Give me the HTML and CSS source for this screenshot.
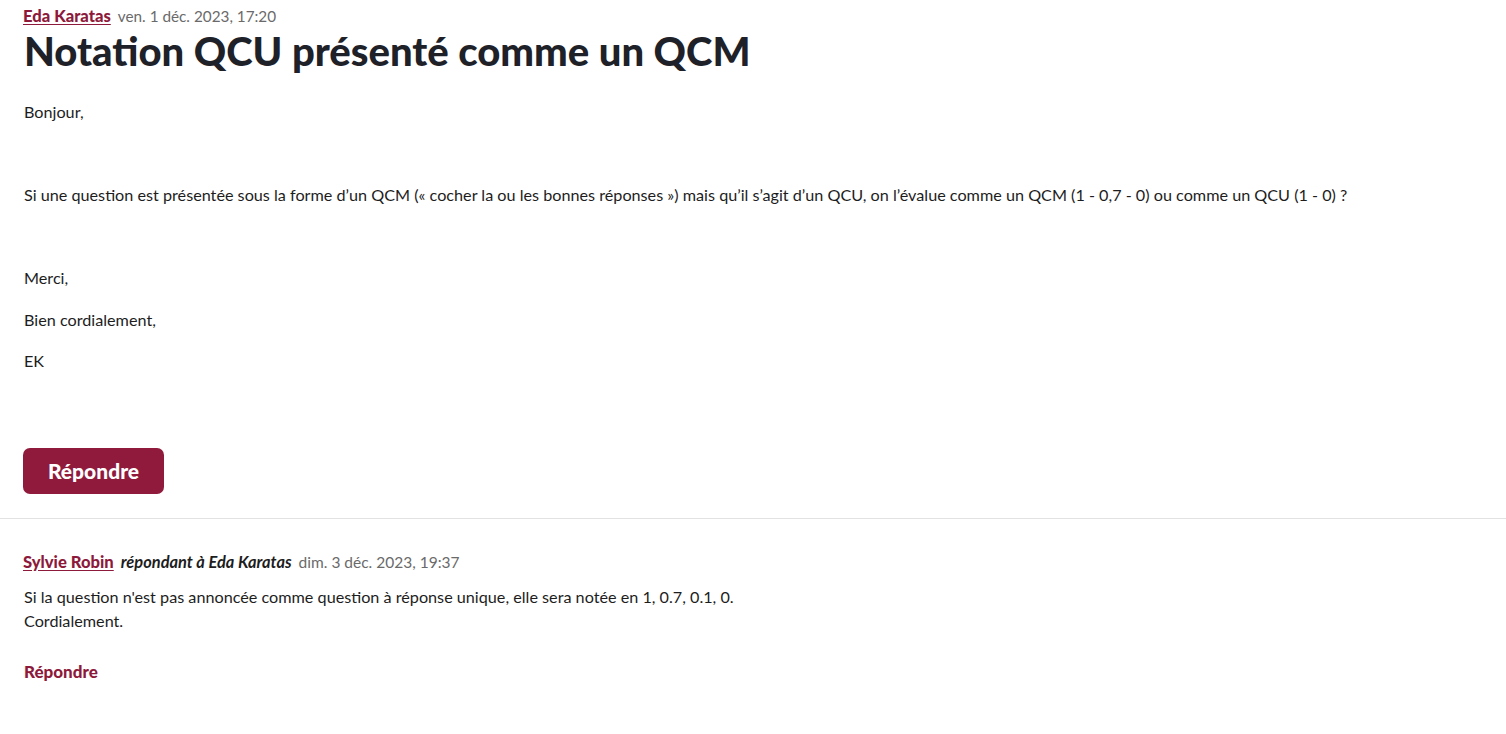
FILE: index.html
```html
<!DOCTYPE html>
<html lang="fr">
<head>
<meta charset="utf-8">
<title>Notation QCU présenté comme un QCM</title>
<link rel="stylesheet" href="styles.css">
</head>
<body>
<article class="post">
  <div class="meta">
    <a class="author" href="#">Eda Karatas</a>
    <span class="date">ven. 1 déc. 2023, 17:20</span>
  </div>
  <h1 class="title">Notation QCU présenté comme un QCM</h1>
  <div class="content">
    <p>Bonjour,</p>
    <p>&nbsp;</p>
    <p>Si une question est présentée sous la forme d’un QCM (« cocher la ou les bonnes réponses ») mais qu’il s’agit d’un QCU, on l’évalue comme un QCM (1 - 0,7 - 0) ou comme un QCU (1 - 0) ?</p>
    <p>&nbsp;</p>
    <p>Merci,</p>
    <p>Bien cordialement,</p>
    <p>EK</p>
  </div>
  <button class="btn-reply" type="button">Répondre</button>
</article>
<section class="reply">
  <div class="meta">
    <a class="author" href="#">Sylvie Robin</a>
    <em class="replying">répondant à Eda Karatas</em>
    <span class="date date-reply">dim. 3 déc. 2023, 19:37</span>
  </div>
  <div class="reply-body">Si la question n'est pas annoncée comme question à réponse unique, elle sera notée en 1, 0.7, 0.1, 0.<br>Cordialement.</div>
  <a class="link-reply" href="#">Répondre</a>
</section>
</body>
</html>
```
FILE: styles.css
```css
html, body {
  margin: 0;
  padding: 0;
  background: #ffffff;
}
body {
  font-family: Lato, "Open Sans", sans-serif;
  font-size: 16.2px;
  color: #1d1d1d;
}
.post {
  padding: 4px 24px 24px;
  border-bottom: 1px solid #e2e2e2;
}
.meta {
  display: flex;
  align-items: baseline;
  gap: 7px;
  line-height: 24px;
}
.author {
  color: #8d1a3b;
  font-weight: 900;
  font-size: 16.6px;
  text-decoration: underline;
  text-underline-offset: 2px;
  margin-left: -1px;
}
.date {
  color: #6a6a6a;
  font-size: 15.3px;
}
.title {
  margin: 0;
  font-size: 40px;
  line-height: 46px;
  font-weight: 900;
  color: #1e2128;
}
.content {
  margin-top: 26px;
}
.content p {
  margin: 0 0 17px;
  line-height: 24.5px;
}
.btn-reply {
  margin-top: 57px;
  margin-left: -1px;
  width: 141px;
  height: 46px;
  border: none;
  border-radius: 7px;
  background: #8f1a3c;
  color: #ffffff;
  font-family: Lato, sans-serif;
  font-weight: 900;
  font-size: 21px;
  cursor: pointer;
}
.reply {
  padding: 31px 24px 40px;
}
.replying {
  font-weight: 700;
  font-size: 16.4px;
  color: #1d1d1d;
}
.date-reply {
  font-size: 15.5px;
}
.reply-body {
  margin-top: 11px;
  line-height: 24px;
}
.link-reply {
  display: inline-block;
  margin-top: 28px;
  color: #8d1a3b;
  font-weight: 900;
  font-size: 17px;
  text-decoration: none;
}
```
